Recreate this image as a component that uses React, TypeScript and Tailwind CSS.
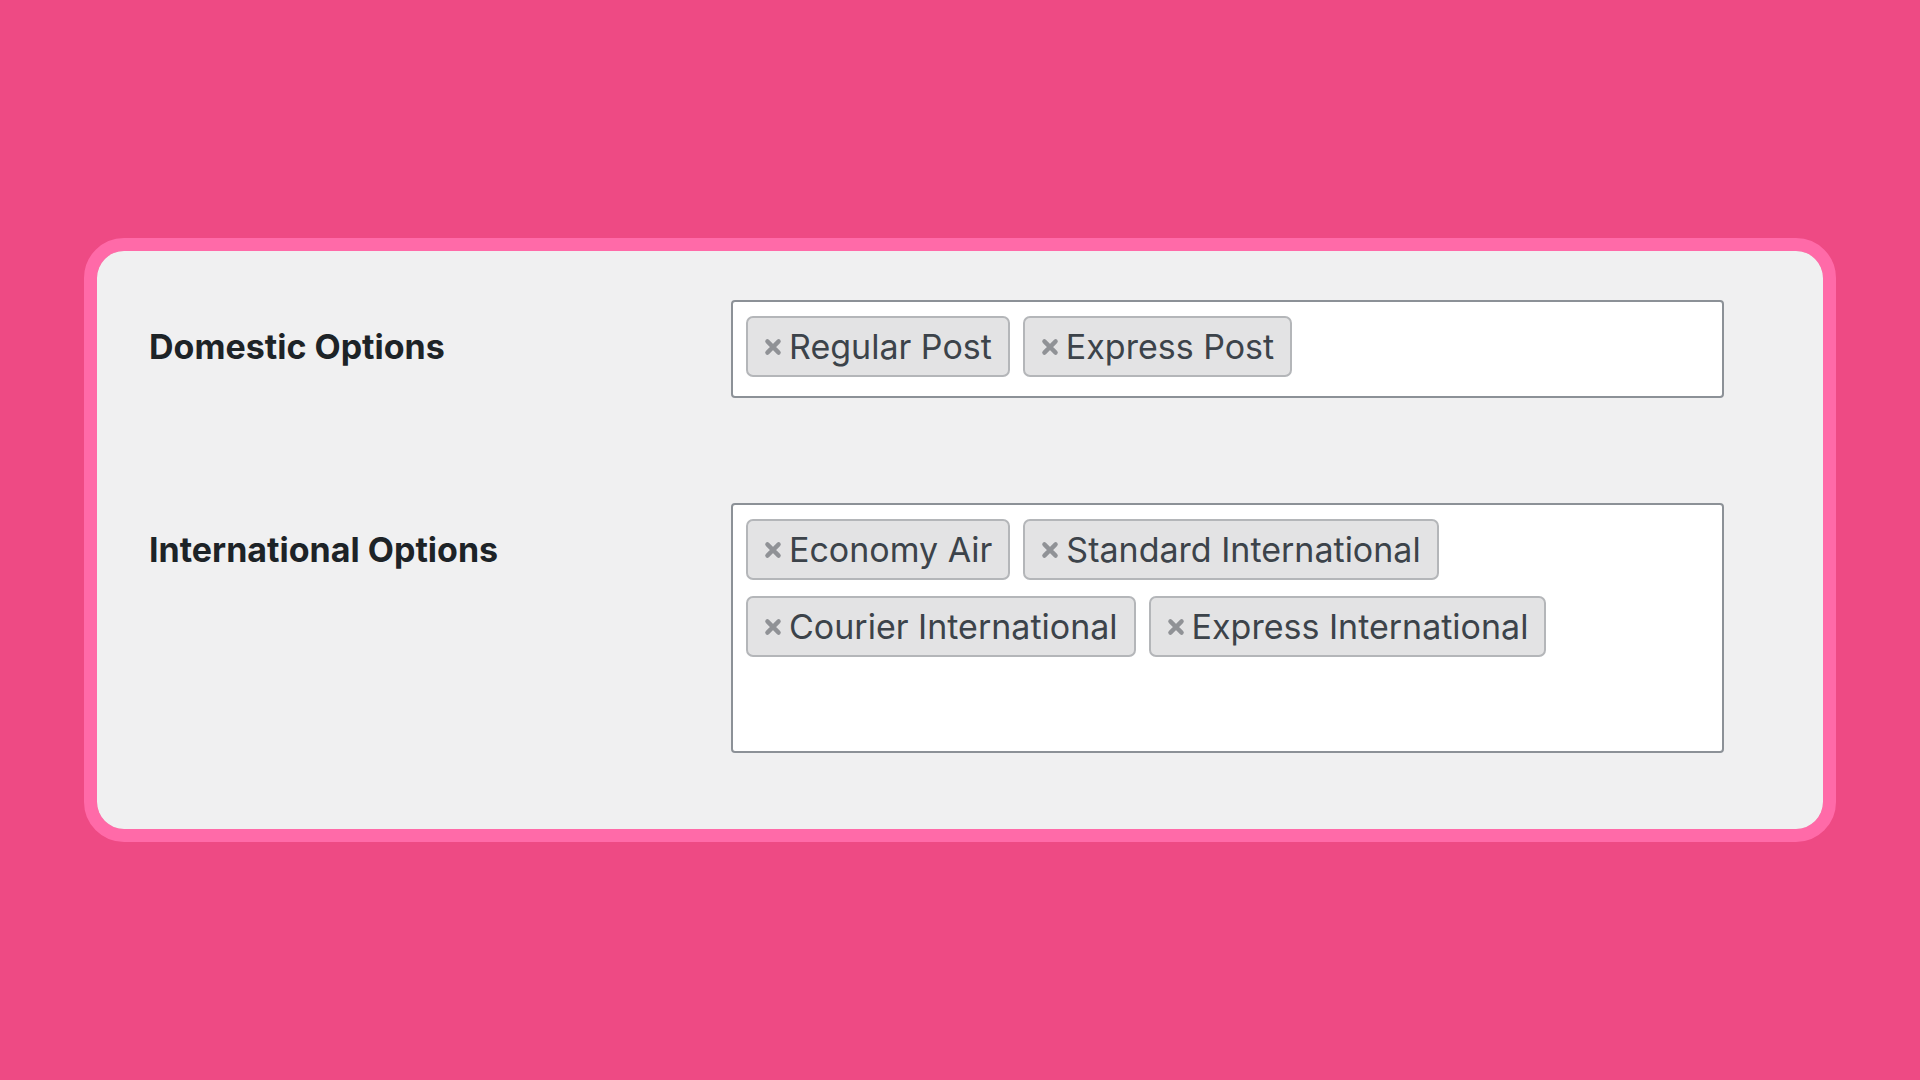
import React from 'react';

const domestic = ['Regular Post', 'Express Post'];
const international = [
  'Economy Air',
  'Standard International',
  'Courier International',
  'Express International',
];

function RemoveIcon() {
  return (
    <svg width="18" height="18" viewBox="0 0 16 16" className="shrink-0">
      <path d="M3 3L13 13M13 3L3 13" stroke="#909296" strokeWidth={3.8} strokeLinecap="round" />
    </svg>
  );
}

function Tag({ label }: { label: string }) {
  return (
    <span className="flex h-[61px] items-center gap-[7px] rounded-[7px] border-2 border-[#b4b6b9] bg-[#e3e3e4] pl-[16px] pr-[16px] text-[34px] text-[#3c434a]">
      <RemoveIcon />
      <span className="leading-none">{label}</span>
    </span>
  );
}

function TagBox({ items, tall }: { items: string[]; tall?: boolean }) {
  return (
    <div
      className={`flex w-[993px] flex-wrap content-start gap-x-[13px] gap-y-[16px] rounded-[4px] border-2 border-[#8c9197] bg-white px-[13px] pt-[14px] ${
        tall ? 'h-[250px]' : 'h-[98px]'
      }`}
    >
      {items.map((item) => (
        <Tag key={item} label={item} />
      ))}
    </div>
  );
}

function Row({ label, items, tall }: { label: string; items: string[]; tall?: boolean }) {
  return (
    <div className="flex items-start">
      <div className="flex h-[95px] w-[582px] items-center pb-[2px] text-[34px] font-bold text-[#1d2327]">
        {label}
      </div>
      <TagBox items={items} tall={tall} />
    </div>
  );
}

export default function App() {
  return (
    <div
      className="flex min-h-screen items-center justify-center bg-[#ee4a84]"
      style={{ fontFamily: 'Inter, "Liberation Sans", sans-serif' }}
    >
      <div className="w-[1752px] h-[604px] rounded-[40px] border-[13px] border-[#ff6aa8]">
        <div className="flex h-full flex-col gap-[105px] rounded-[27px] bg-[#f0f0f1] pl-[52px] pt-[49px]">
          <Row label="Domestic Options" items={domestic} />
          <Row label="International Options" items={international} tall />
        </div>
      </div>
    </div>
  );
}
